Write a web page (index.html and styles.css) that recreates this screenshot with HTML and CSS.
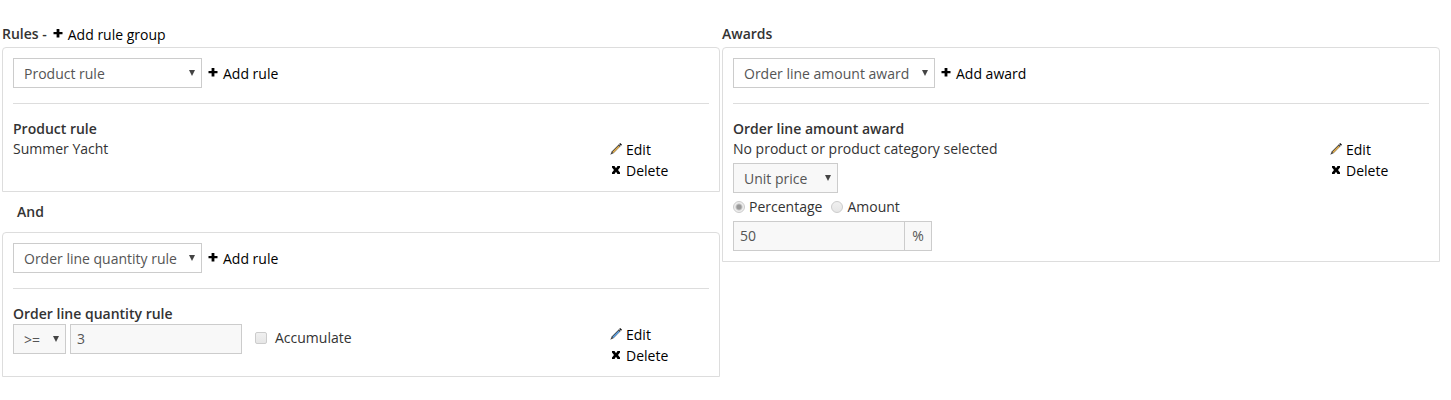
FILE: index.html
```html
<!DOCTYPE html>
<html lang="en">
<head>
    <meta charset="UTF-8">
    <meta name="viewport" content="width=device-width, initial-scale=1.0">
    <title>Discount</title>
    <link rel="stylesheet" href="styles.css">
</head>
<body>

<!-- shared icons -->
<svg class="sprite" aria-hidden="true">
    <symbol id="icon-add" viewBox="0 0 12 12">
        <path d="M3.600 1h2.800v3h3.100v2.300H6.400v3.200H3.600V6.300H0.500V4h3.100z"/>
    </symbol>
    <symbol id="icon-delete" viewBox="0 0 12 12">
        <path d="M2 2h2.500L6 4.200 7.500 2H10v1.500L8 6l2 2.500V10H7.500L6 7.800 4.500 10H2V8.500L4 6 2 3.500z"/>
    </symbol>
    <symbol id="icon-edit" viewBox="0 0 12 12">
        <path d="M0.300 11.700L1.700 8.500 8.900 1.300l1.800 1.800-7.200 7.200z" fill="#444"/>
        <path d="M2.400 8.900L8.600 2.700l1 1-6.200 6.200z" fill="currentColor"/>
        <path d="M9.200 1l1-1L12 1.800l-1 1z" fill="#111"/>
    </symbol>
</svg>

<div class="container">
    <div class="column">
        <div class="column-header">
            <strong>Rules -</strong>
            <a href="#" class="action"><svg class="icon"><use href="#icon-add"/></svg>Add rule group</a>
        </div>

        <div class="panel">
            <div class="toolbar">
                <select class="select rule-select" aria-label="Rule type">
                    <option>Product rule</option>
                    <option>Order line quantity rule</option>
                </select>
                <a href="#" class="action"><svg class="icon"><use href="#icon-add"/></svg>Add rule</a>
            </div>
            <div class="item">
                <div class="item-content">
                    <strong>Product rule</strong>
                    <div>Summer Yacht</div>
                </div>
                <div class="item-actions">
                    <a href="#" class="action"><svg class="icon pencil"><use href="#icon-edit"/></svg>Edit</a>
                    <a href="#" class="action"><svg class="icon"><use href="#icon-delete"/></svg>Delete</a>
                </div>
            </div>
        </div>

        <div class="operator">And</div>

        <div class="panel">
            <div class="toolbar">
                <select class="select rule-select" aria-label="Rule type">
                    <option>Order line quantity rule</option>
                    <option>Product rule</option>
                </select>
                <a href="#" class="action"><svg class="icon"><use href="#icon-add"/></svg>Add rule</a>
            </div>
            <div class="item">
                <div class="item-content">
                    <strong>Order line quantity rule</strong>
                    <div class="fields">
                        <select class="select compare-select" aria-label="Comparison" disabled>
                            <option>&gt;=</option>
                        </select>
                        <input type="text" class="text-input" value="3" aria-label="Quantity" disabled>
                        <div class="check">
                            <input type="checkbox" class="tick" id="accumulate" disabled>
                            <label for="accumulate">Accumulate</label>
                        </div>
                    </div>
                </div>
                <div class="item-actions">
                    <a href="#" class="action"><svg class="icon pencil pencil-blue"><use href="#icon-edit"/></svg>Edit</a>
                    <a href="#" class="action"><svg class="icon"><use href="#icon-delete"/></svg>Delete</a>
                </div>
            </div>
        </div>
    </div>

    <div class="column">
        <div class="column-header"><strong>Awards</strong></div>

        <div class="panel">
            <div class="toolbar">
                <select class="select award-select" aria-label="Award type">
                    <option>Order line amount award</option>
                </select>
                <a href="#" class="action"><svg class="icon"><use href="#icon-add"/></svg>Add award</a>
            </div>
            <div class="item">
                <div class="item-content">
                    <strong>Order line amount award</strong>
                    <div>No product or product category selected</div>
                    <select class="select price-select" aria-label="Price" disabled>
                        <option>Unit price</option>
                    </select>
                    <div class="radios">
                        <input type="radio" class="radio" name="adjustment" id="percentage" checked disabled>
                        <label for="percentage">Percentage</label>
                        <input type="radio" class="radio" name="adjustment" id="amount" disabled>
                        <label for="amount">Amount</label>
                    </div>
                    <div class="input-group">
                        <input type="text" class="text-input" value="50" aria-label="Percentage value" disabled>
                        <span class="unit">%</span>
                    </div>
                </div>
                <div class="item-actions">
                    <a href="#" class="action"><svg class="icon pencil"><use href="#icon-edit"/></svg>Edit</a>
                    <a href="#" class="action"><svg class="icon"><use href="#icon-delete"/></svg>Delete</a>
                </div>
            </div>
        </div>
    </div>
</div>

</body>
</html>
```
FILE: styles.css
```css
* {
    box-sizing: border-box;
}

body {
    margin: 0;
    background-color: #fff;
    color: #333;
    font-family: "Open Sans", sans-serif;
    font-size: 14px;
    line-height: 20px;
}

strong {
    font-weight: 600;
}

.sprite {
    display: none;
}

.container {
    display: flex;
    align-items: flex-start;
    gap: 2px;
    padding: 24px 11px 24px 2px;
}

.column {
    flex: 1;
    min-width: 0;
}

.column-header {
    display: flex;
    align-items: flex-start;
    gap: 6px;
    height: 23px;
}

.panel {
    border: 1px solid #ddd;
    border-radius: 4px 4px 0 0;
    padding: 10px;
}

.toolbar {
    display: flex;
    align-items: center;
    gap: 6px;
    padding-bottom: 15px;
    border-bottom: 1px solid #ddd;
    margin-bottom: 15px;
}

.action {
    display: flex;
    align-items: center;
    gap: 3px;
    height: 21px;
    color: #000;
    text-decoration: none;
}

.toolbar .action {
    height: 20px;
    margin-top: 2px;
}

.icon {
    width: 12px;
    height: 12px;
    flex: none;
    margin-bottom: 2px;
}

.icon.pencil {
    color: #e8b04a;
}

.icon.pencil-blue {
    color: #5ba3e8;
}

.item {
    display: flex;
}

.item-content {
    flex: 1;
}

.item-content strong {
    display: block;
}

.item-actions {
    flex: 0 0 99px;
    padding-top: 20px;
}

.item-actions .action {
    gap: 4px;
}

.operator {
    height: 40px;
    padding-left: 15px;
    line-height: 40px;
    font-weight: 600;
}

.select {
    display: block;
    height: 30px;
    padding: 2px 10px 0;
    border: 1px solid #ccc;
    border-radius: 0;
    appearance: none;
    background: #fff url("data:image/svg+xml,%3Csvg xmlns='http://www.w3.org/2000/svg' width='6' height='6'%3E%3Cpath d='M0 0h6L3 6z' fill='%23444'/%3E%3C/svg%3E") no-repeat right 6px top 11px;
    color: #555;
    font: inherit;
    opacity: 1;
}

.select:disabled,
.text-input:disabled,
.unit {
    background-color: #f8f8f8;
}

.rule-select {
    width: 189px;
}

.award-select {
    width: 202px;
}

.compare-select {
    width: 53px;
}

.price-select {
    width: 105px;
    margin-top: 4px;
}

.text-input {
    width: 172px;
    height: 30px;
    padding: 0 6px 2px;
    border: 1px solid #ccc;
    border-radius: 0;
    color: #555;
    font: inherit;
}

.fields {
    display: flex;
    align-items: center;
    gap: 4px;
}

.check {
    display: flex;
    align-items: center;
    gap: 8px;
    margin-left: 9px;
    padding-bottom: 2px;
}

.tick,
.radio {
    appearance: none;
    width: 12px;
    height: 12px;
    margin: 0;
    border: 1px solid #ccc;
    background: linear-gradient(#f0f0f0, #e6e6e6);
}

.tick {
    border-radius: 2px;
}

.radio {
    border-radius: 50%;
}

.radio:checked {
    background: radial-gradient(circle, #999 0 2px, #eee 4px);
}

.radios {
    display: flex;
    align-items: center;
    gap: 4px;
    height: 28px;
}

.radios label + .radio {
    margin-left: 5px;
}

.input-group {
    display: flex;
}

.unit {
    width: 27px;
    border: 1px solid #ccc;
    border-left: 0;
    line-height: 28px;
    text-align: center;
    color: #555;
}
```
